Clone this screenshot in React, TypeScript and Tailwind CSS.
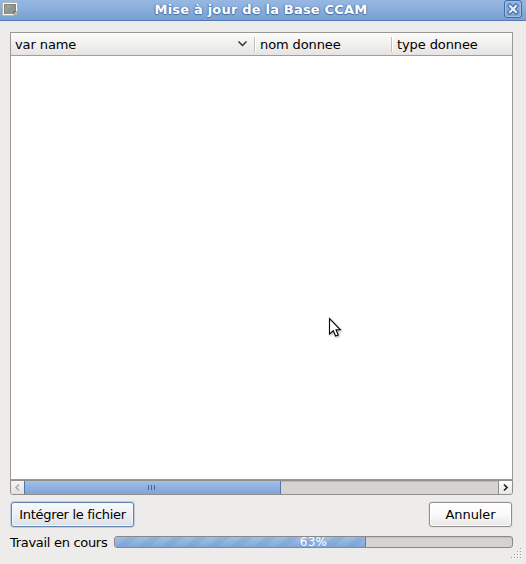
import React from "react";

const font = "font-['DejaVu_Sans','Liberation_Sans',sans-serif]";

function TitleBar() {
  return (
    <header className="relative flex h-[21px] shrink-0 items-start justify-between border-b border-[#4f79b0] bg-gradient-to-b from-[#98b8e3] to-[#78a0d1]">
      <svg className="ml-[2px] mt-[2px] h-[14px] w-4" viewBox="0 0 16 14">
        <path d="M.5.5h15v9l-4 4H.5z" fill="#fafaf5" stroke="#b5b5ac" />
        <path d="M2 2h12v7h-3v3H2z" fill="#8f9391" />
        <path d="M2 11l10-9H2z" fill="#9b9f9d" />
        <path d="M2.5 11.5v-9h11v7" fill="none" stroke="#808480" />
        <path d="M11 13V9h4z" fill="#74776e" />
        <path d="M12 13l3-3v3z" fill="#b8b8ac" />
      </svg>
      <h1 className="mt-[1px] whitespace-nowrap text-[13px] leading-[17px] font-bold tracking-[0.2px] text-white [text-shadow:0_1px_1px_#426da5,1px_0_1px_#5d87bd,-1px_0_1px_#5d87bd]">
        Mise à jour de la Base CCAM
      </h1>
      <button className="mr-[4px] flex h-[18px] w-[18px] items-center justify-center rounded-[3px] border border-[#426b9f] bg-gradient-to-b from-[#8fb1df] to-[#7da4d5] shadow-[inset_0_0_0_1px_#a2c0e7]">
        <svg width="12" height="12" viewBox="0 0 12 12">
          <path d="M3 3l6 6M9 3l-6 6" stroke="#426a9f" strokeWidth="4.4" strokeLinecap="square" />
          <path d="M3 3l6 6M9 3l-6 6" stroke="#e9f0f9" strokeWidth="2.2" strokeLinecap="square" />
        </svg>
      </button>
    </header>
  );
}

function Divider() {
  return <div className="h-[15px] w-[2px] border-l border-[#c3c1be] bg-white" />;
}

function Table() {
  return (
    <section className="flex h-[448px] flex-col border border-[#9b9996] bg-white">
      <div className="flex h-[23px] items-center border-b border-[#a09e9b] bg-gradient-to-b from-[#fcfcfb] via-[#f1f0ef] to-[#e5e4e2] text-[13px] leading-[16px] tracking-[-0.1px]">
        <div className="flex w-[243px] items-center justify-between pl-[4px] pr-[6px]">
          <span className="whitespace-nowrap pt-[2px]">var name</span>
          <svg className="-mt-px" width="11" height="8" viewBox="0 0 11 8">
            <path d="M1.5 1.5l4 4 4-4" fill="none" stroke="#2c2c2c" strokeWidth="1.4" />
          </svg>
        </div>
        <Divider />
        <span className="w-[135px] whitespace-nowrap pl-[4px] pt-[2px]">nom donnee</span>
        <Divider />
        <span className="whitespace-nowrap pl-[4px] pt-[2px]">type donnee</span>
      </div>
    </section>
  );
}

function ScrollBar() {
  return (
    <div className="flex h-[15px] overflow-hidden rounded-b-[3px] border border-[#918f8c] bg-[#d5d4d2] shadow-[inset_0_1px_1px_#bdbbb9]">
      <div className="flex w-[13px] items-center justify-center bg-gradient-to-b from-[#f5f4f3] to-[#e3e2df]">
        <svg width="7" height="9" viewBox="0 0 7 9"><path d="M5 1.5l-3 3 3 3" fill="none" stroke="#aaa8a5" strokeWidth="1.5" /></svg>
      </div>
      <div className="-my-px flex w-[257px] items-center justify-center gap-[2px] border border-[#5078ac] bg-gradient-to-b from-[#a1c0e8] via-[#8db0df] to-[#7fa5d7] pr-[2px]">
        <i className="h-[5px] w-px bg-[#41658f]" />
        <i className="h-[5px] w-px bg-[#41658f]" />
        <i className="h-[5px] w-px bg-[#41658f]" />
      </div>
      <div className="flex-1" />
      <div className="flex w-[14px] items-center justify-center border-l border-[#918f8c] bg-gradient-to-b from-[#fdfdfd] to-[#e8e7e5]">
        <svg width="7" height="9" viewBox="0 0 7 9"><path d="M2 1.5l3 3-3 3" fill="none" stroke="#222" strokeWidth="1.7" /></svg>
      </div>
    </div>
  );
}

function Progress() {
  return (
    <div className="relative h-[12px] w-[399px] overflow-hidden rounded-[3px] border border-[#8b8986] bg-[#d4d3d1] shadow-[inset_0_1px_1px_#c1c0be]">
      <svg width="251" height="10" className="block">
        <defs>
          <linearGradient id="fill" x1="0" y1="0" x2="0" y2="1">
            <stop offset="0" stopColor="#a0bfe7" />
            <stop offset="1" stopColor="#83a8d8" />
          </linearGradient>
          <pattern id="stripes" width="23" height="10" patternUnits="userSpaceOnUse">
            <path d="M0 10L12 0H23L11 10z" fill="#6f98cc" fillOpacity=".3" />
          </pattern>
        </defs>
        <path d="M0 0h251v10H0z" fill="url(#fill)" />
        <path d="M0 0h251v10H0z" fill="url(#stripes)" />
        <path d="M250.5 0v10" stroke="#567eb2" />
      </svg>
      <span className="absolute inset-x-0 -top-[3px] text-center text-[12px] leading-[16px] tracking-[0.3px] text-white">63%</span>
    </div>
  );
}

export default function App() {
  return (
    <div className={`relative flex h-[564px] w-[526px] flex-col overflow-hidden bg-[#edecea] text-black ${font}`}>
      <TitleBar />
      <main className="ml-[10px] mt-[11px] w-[503px]">
        <Table />
        <ScrollBar />
        <div className="mt-[7px] flex h-[25px] justify-between pl-px pr-px">
          <button className="h-[25px] w-[123px] whitespace-nowrap rounded-[3px] border border-[#6484ae] bg-gradient-to-b from-[#f8fafc] via-[#eceff3] to-[#dce0e6] text-[13px] leading-[22px] tracking-[-0.3px] shadow-[0_0_0_1px_#bdcde2,inset_0_0_0_1px_#f3f7fc]">Intégrer le fichier</button>
          <button className="h-[25px] w-[83px] rounded-[3px] border border-[#8f8d8a] bg-gradient-to-b from-white via-[#fafafa] to-[#e7e6e4] text-[13px] leading-[22px] tracking-[-0.1px] shadow-[0_0_0_1px_#e3e2e0,inset_0_0_0_1px_#fff]">Annuler</button>
        </div>
        <div className="mt-[9px] flex h-[12px] items-center justify-between">
          <span className="whitespace-nowrap pt-[2px] text-[13px] leading-[16px] tracking-[-0.3px]">Travail en cours</span>
          <Progress />
        </div>
      </main>
      <svg className="absolute left-[510px] top-[548px]" width="13" height="13" viewBox="0 0 13 13">
        {[0, 1, 2, 3].flatMap((row) =>
          Array.from({ length: row + 1 }, (_, i) => (
            <g key={`${row}-${i}`}>
              <rect x={11 - i * 3} y={1 + row * 3} width="1" height="1" fill="#fff" />
              <rect x={10 - i * 3} y={row * 3} width="1" height="1" fill="#a3a19e" />
            </g>
          )),
        )}
      </svg>
      <svg className="absolute left-[327px] top-[316px] drop-shadow-[1px_1px_1px_#0005]" width="16" height="24" viewBox="0 0 16 24">
        <path d="M2.5 2.5v15.5l3.8-3.3 2.3 5.3 2.6-1.1-2.2-5.2h4.3z" fill="#fff" stroke="#000" strokeWidth="1.1" />
      </svg>
    </div>
  );
}
